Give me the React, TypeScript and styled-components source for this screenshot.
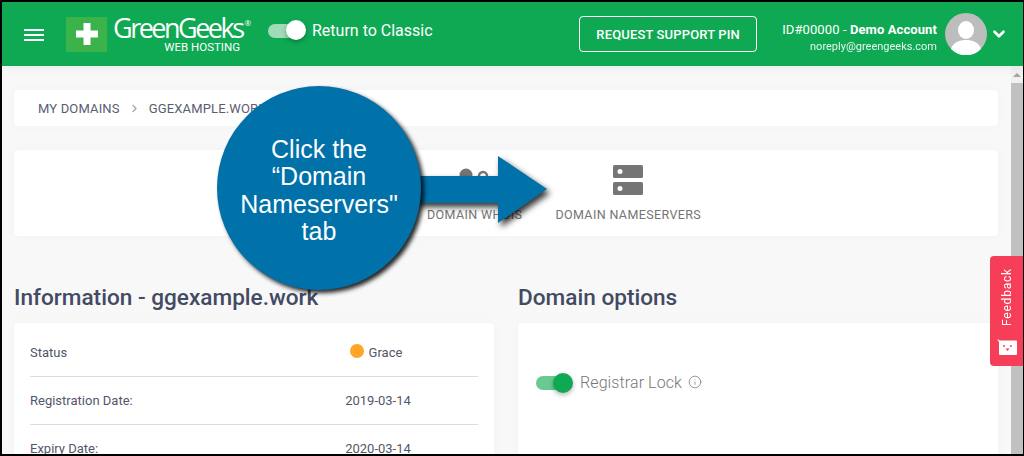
import React from 'react';
import styled, { createGlobalStyle } from 'styled-components';
import { ChevronDown, ChevronRight, Info } from 'lucide-react';

const GlobalStyle = createGlobalStyle`
  html, body {
    margin: 0;
    padding: 0;
    overflow: hidden;
    font-family: Roboto, "Liberation Sans", sans-serif;
  }
`;

function App() {
  return (
    <Frame>
      <GlobalStyle />
      <Header>
        <MenuButton>
          <span />
          <span />
          <span />
        </MenuButton>
        <LogoMark>
          <svg width="22" height="22" viewBox="0 0 22 22">
            <path d="M7.5 0h7v7.5H22v7h-7.5V22h-7v-7.5H0v-7h7.5z" fill="#fff" />
          </svg>
        </LogoMark>
        <LogoText>
          <LogoName>
            GreenGeeks<sup>®</sup>
          </LogoName>
          <LogoSub>WEB HOSTING</LogoSub>
        </LogoText>
        <ClassicSwitch>
          <SwitchTrack $light />
          <SwitchKnob $light />
        </ClassicSwitch>
        <ClassicLabel>Return to Classic</ClassicLabel>
        <PinButton>REQUEST SUPPORT PIN</PinButton>
        <Account>
          <AccountId>
            ID#00000 - <b>Demo Account</b>
          </AccountId>
          <AccountMail>noreply@greengeeks.com</AccountMail>
        </Account>
        <Avatar>
          <svg width="42" height="42" viewBox="0 0 42 42">
            <circle cx="21" cy="21" r="21" fill="#bdbdbd" />
            <ellipse cx="21" cy="17" rx="8" ry="9" fill="#fff" />
            <path d="M6 36c2-7 9-9 15-9s13 2 15 9a21 21 0 0 1-30 0z" fill="#fff" />
          </svg>
        </Avatar>
        <ChevronDown size={18} color="#fff" strokeWidth={3.5} />
      </Header>

      <Body>
        <Content>
          <Breadcrumb>
            <span>MY DOMAINS</span>
            <ChevronRight size={13} color="#a0a3ad" />
            <span>GGEXAMPLE.WORK</span>
          </Breadcrumb>

          <TabCard>
            <Tab>
              <svg width="40" height="30" viewBox="0 0 40 30">
                <circle cx="11" cy="10" r="6.5" fill="#757575" />
                <circle cx="28" cy="11" r="4" fill="none" stroke="#757575" strokeWidth="2.5" />
              </svg>
              <TabLabel>DOMAIN WHOIS</TabLabel>
            </Tab>
            <Tab>
              <svg width="30" height="30" viewBox="0 0 30 30">
                <rect y="0" width="30" height="13" rx="1.5" fill="#757575" />
                <rect y="17" width="30" height="13" rx="1.5" fill="#757575" />
                <circle cx="7" cy="6.5" r="2.5" fill="#fff" />
                <circle cx="7" cy="23.5" r="2.5" fill="#fff" />
              </svg>
              <TabLabel>DOMAIN NAMESERVERS</TabLabel>
            </Tab>
          </TabCard>

          <Columns>
            <Column>
              <SectionTitle>Information - ggexample.work</SectionTitle>
              <InfoCard>
                <InfoRow>
                  <span>Status</span>
                  <InfoValue>
                    <StatusDot />
                    Grace
                  </InfoValue>
                </InfoRow>
                <InfoRow>
                  <span>Registration Date:</span>
                  <InfoValue>2019-03-14</InfoValue>
                </InfoRow>
                <InfoRow>
                  <span>Expiry Date:</span>
                  <InfoValue>2020-03-14</InfoValue>
                </InfoRow>
              </InfoCard>
            </Column>
            <Column>
              <SectionTitle>Domain options</SectionTitle>
              <OptionsCard>
                <LockSwitch>
                  <SwitchTrack />
                  <SwitchKnob />
                </LockSwitch>
                <LockLabel>Registrar Lock</LockLabel>
                <Info size={14} color="#8a8a8a" strokeWidth={1.5} />
              </OptionsCard>
            </Column>
          </Columns>
        </Content>
        <Scrollbar>
          <ScrollArrow />
          <ScrollThumb />
        </Scrollbar>
      </Body>

      <Feedback>
        <FeedbackText>Feedback</FeedbackText>
        <svg width="20" height="16" viewBox="0 0 20 16">
          <path d="M0 0l3 1.5h16a1 1 0 0 1 1 1V15a1 1 0 0 1-1 1H3a1 1 0 0 1-1-1V3z" fill="#fff" />
          <circle cx="7" cy="7" r="1" fill="#f63e58" />
          <circle cx="14" cy="7" r="1" fill="#f63e58" />
          <path d="M8.5 9.5h4l-2 2.5z" fill="#f63e58" />
        </svg>
      </Feedback>

      <Callout>
        <ArrowShape width="132" height="72" viewBox="0 0 132 72">
          <path d="M0 20h83V0l49 33-49 34V47H0z" fill="#0071a9" />
        </ArrowShape>
        <Bubble>
          Click the
          <br />
          “Domain
          <br />
          Nameservers"
          <br />
          tab
        </Bubble>
      </Callout>
    </Frame>
  );
}

export default App;

const Frame = styled.div`
  position: relative;
  box-sizing: border-box;
  width: 1024px;
  height: 456px;
  border: 2px solid #000;
  border-right-width: 1px;
  background: #f8f8f8;
  display: flex;
  flex-direction: column;
  overflow: hidden;
`;

const Header = styled.header`
  height: 64px;
  flex: none;
  background: #0fa954;
  display: flex;
  align-items: center;
  padding: 0 15px 0 22px;
  color: #fff;
  position: relative;
  z-index: 1;
  box-shadow: 0 2px 10px rgba(0, 0, 0, 0.06);
`;

const MenuButton = styled.div`
  width: 20px;
  display: flex;
  flex-direction: column;
  gap: 3px;
  margin-top: 1px;

  span {
    height: 2px;
    background: #fff;
  }
`;

const LogoMark = styled.div`
  width: 41px;
  height: 35px;
  margin-left: 22px;
  background: #3cb34a;
  display: flex;
  align-items: center;
  justify-content: center;
`;

const LogoText = styled.div`
  width: 132px;
  margin-left: 6px;
  display: flex;
  flex-direction: column;
`;

const LogoName = styled.div`
  font-family: "Open Sans", sans-serif;
  font-size: 27px;
  line-height: 26px;
  letter-spacing: -2.5px;
  white-space: nowrap;

  sup {
    font-size: 8px;
    line-height: 0;
    letter-spacing: 0;
    vertical-align: 12px;
    margin-left: 2px;
  }
`;

const LogoSub = styled.div`
  font-size: 11.5px;
  line-height: 12px;
  text-align: right;
  padding-right: 5px;
  font-weight: 400;
`;

const ClassicSwitch = styled.div`
  position: relative;
  width: 38px;
  height: 24px;
  margin: -6px 0 0 23px;
`;

const SwitchTrack = styled.div<{ $light?: boolean }>`
  position: absolute;
  left: 0;
  top: ${(p) => (p.$light ? '5px' : '2px')};
  width: ${(p) => (p.$light ? '36px' : '34px')};
  height: 14px;
  border-radius: 7px;
  background: ${(p) => (p.$light ? '#a0dcb8' : '#67cb91')};
`;

const SwitchKnob = styled.div<{ $light?: boolean }>`
  position: absolute;
  right: ${(p) => (p.$light ? '0' : '-3px')};
  top: ${(p) => (p.$light ? '1px' : '-1px')};
  width: 20px;
  height: 20px;
  border-radius: 50%;
  background: ${(p) => (p.$light ? '#fff' : '#0fa954')};
  box-shadow: 0 2px 5px rgba(0, 0, 0, 0.3);
`;

const ClassicLabel = styled.div`
  font-size: 16px;
  margin: -8px 0 0 6px;
  white-space: nowrap;
`;

const PinButton = styled.div`
  margin-left: auto;
  box-sizing: border-box;
  width: 178px;
  height: 36px;
  border: 1px solid #fff;
  border-radius: 4px;
  display: flex;
  align-items: center;
  justify-content: center;
  font-size: 13px;
  font-weight: 500;
  letter-spacing: 0.15px;
`;

const Account = styled.div`
  margin-left: 25px;
  text-align: right;
  white-space: nowrap;
  margin-top: 8px;
`;

const AccountId = styled.div`
  font-size: 13px;
  line-height: 18px;
  letter-spacing: 0.1px;

  b {
    font-weight: 700;
  }
`;

const AccountMail = styled.div`
  font-size: 11px;
  line-height: 18px;
  margin-top: -1px;
  opacity: 0.9;
`;

const Avatar = styled.div`
  width: 42px;
  height: 42px;
  margin: 0 3px 0 8px;

  svg {
    display: block;
  }
`;

const Body = styled.div`
  flex: 1;
  display: flex;
  min-height: 0;
`;

const Content = styled.main`
  flex: 1;
  min-width: 0;
  padding: 24px 13px 0 12px;
  display: flex;
  flex-direction: column;
  gap: 24px;
`;

const Card = styled.div`
  background: #fff;
  border-radius: 4px;
  box-shadow: 0 0 8px rgba(0, 0, 0, 0.03);
`;

const Breadcrumb = styled(Card)`
  height: 36px;
  flex: none;
  display: flex;
  align-items: center;
  gap: 8px;
  padding-left: 24px;
  font-size: 13px;
  letter-spacing: 0.15px;
  color: #5a5d70;
`;

const TabCard = styled(Card)`
  height: 86px;
  flex: none;
  display: flex;
  gap: 33px;
  padding-left: 413px;
  box-sizing: border-box;
`;

const Tab = styled.div`
  padding-top: 15px;
  display: flex;
  flex-direction: column;
  align-items: center;
  gap: 13px;
`;

const TabLabel = styled.div`
  font-size: 12.5px;
  line-height: 14px;
  color: #757575;
  letter-spacing: 0.38px;
  white-space: nowrap;
`;

const Columns = styled.div`
  display: grid;
  grid-template-columns: 480px 480px;
  gap: 24px;
  margin-top: 25px;
`;

const Column = styled.section`
  display: flex;
  flex-direction: column;
  gap: 12px;
  min-width: 0;
`;

const SectionTitle = styled.h2`
  margin: 0;
  font-size: 22.6px;
  line-height: 26px;
  font-weight: 500;
  color: #434a63;
  white-space: nowrap;
`;

const InfoCard = styled(Card)`
  padding: 6px 16px 0;
  height: 300px;
`;

const InfoRow = styled.div`
  display: grid;
  grid-template-columns: 248px 200px;
  align-items: center;
  height: 47px;
  border-bottom: 1px solid #dcdcdc;
  font-size: 13px;
  color: #53566a;
`;

const InfoValue = styled.div`
  display: flex;
  align-items: center;
  justify-content: center;
  gap: 5px;
`;

const StatusDot = styled.span`
  width: 14px;
  height: 14px;
  margin: -3px 0 0 -4px;
  border-radius: 50%;
  background: #ffa528;
`;

const OptionsCard = styled(Card)`
  height: 300px;
  padding: 51px 0 0 18px;
  display: flex;
  align-items: flex-start;
  box-sizing: border-box;

  svg {
    margin: 1px 0 0 6px;
  }
`;

const LockSwitch = styled.div`
  position: relative;
  width: 34px;
  height: 18px;
`;

const LockLabel = styled.div`
  margin: -1px 0 0 10px;
  font-size: 16px;
  line-height: 20px;
  font-weight: 300;
  color: #777;
  white-space: nowrap;
  letter-spacing: 0.1px;
`;

const Scrollbar = styled.div`
  width: 12px;
  flex: none;
  background: #f1f1f1;
  display: flex;
  flex-direction: column;
`;

const ScrollArrow = styled.div`
  height: 17px;
  flex: none;
  display: flex;
  justify-content: center;
  align-items: center;

  &::before {
    content: '';
    border: 4px solid transparent;
    border-top: none;
    border-bottom: 4px solid #a3a3a3;
  }
`;

const ScrollThumb = styled.div`
  flex: 1;
  background: #c1c1c1;
`;

const Feedback = styled.div`
  position: absolute;
  right: 0;
  top: 254px;
  width: 33px;
  height: 110px;
  border-radius: 4px 0 0 4px;
  background: #f63e58;
  display: flex;
  flex-direction: column;
  align-items: center;
  gap: 13px;
  padding-top: 12px;
  box-sizing: border-box;
`;

const FeedbackText = styled.div`
  writing-mode: vertical-rl;
  transform: rotate(180deg);
  font-size: 12px;
  line-height: 14px;
  letter-spacing: 0.8px;
  color: #fff;
`;

const Callout = styled.div`
  position: absolute;
  left: 215px;
  top: 84px;
  width: 330px;
  height: 204px;
`;

const Bubble = styled.div`
  position: absolute;
  left: 0;
  top: 0;
  box-sizing: border-box;
  width: 204px;
  height: 204px;
  padding-top: 50px;
  border-radius: 50%;
  background: #0071a9;
  box-shadow: 3px 3px 4px rgba(0, 0, 0, 0.85);
  color: #fff;
  text-align: center;
  font-family: "Liberation Sans", Arial, sans-serif;
  font-size: 25px;
  line-height: 27.3px;
`;

const ArrowShape = styled.svg`
  position: absolute;
  left: 198px;
  top: 70px;
  overflow: visible;
  filter: drop-shadow(3px 4px 3px rgba(0, 0, 0, 0.8));
`;
